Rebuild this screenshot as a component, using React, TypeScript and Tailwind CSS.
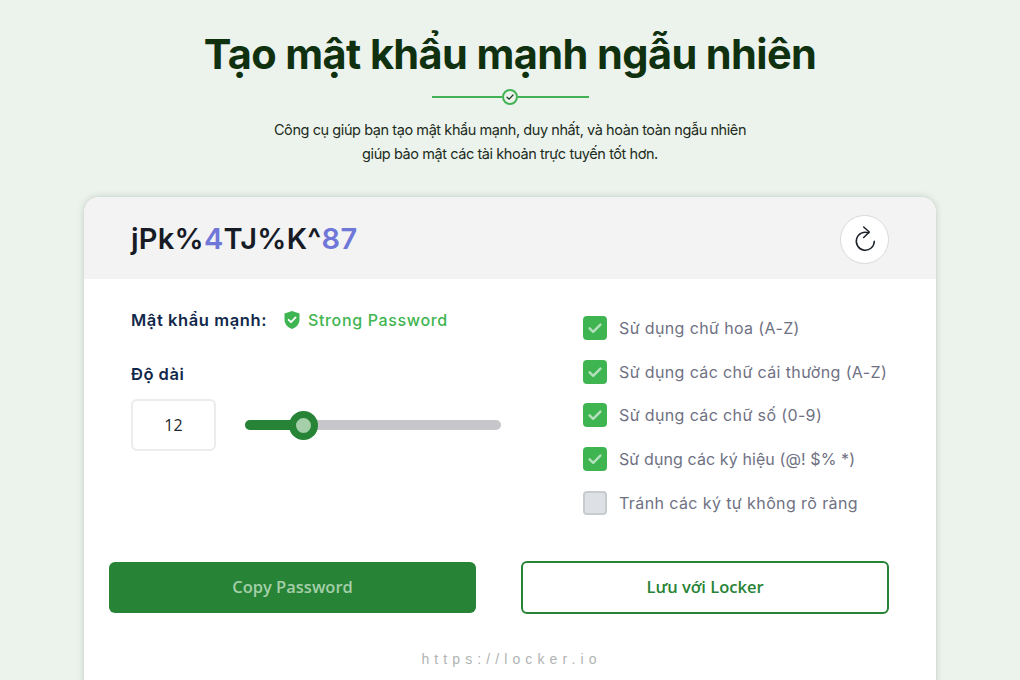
import React from "react";

const Check = () => (
  <svg width="16" height="16" viewBox="0 0 16 16" fill="none">
    <path d="M2.6 8.3 6.2 11.8 13.4 4.6" stroke="#b5e0bd" strokeWidth="2.4" strokeLinecap="round" strokeLinejoin="round" />
  </svg>
);

const options = [
  ["Sử dụng chữ hoa (A-Z)", true, "tracking-[0.37px]"],
  ["Sử dụng các chữ cái thường (A-Z)", true, "tracking-[0.37px]"],
  ["Sử dụng các chữ số (0-9)", true, "tracking-[0.37px]"],
  ["Sử dụng các ký hiệu (@! $% *)", true, "tracking-[0.1px]"],
  ["Tránh các ký tự không rõ ràng", false, "tracking-[0.4px]"],
] as const;

export default function App() {
  return (
    <div className="h-[680px] overflow-hidden bg-[#ecf3ed] flex flex-col items-center font-['Inter',sans-serif]">
      <h1 className="mt-[28px] text-[41.5px] leading-[52px] font-bold tracking-[-0.6px] text-[#10310f] whitespace-nowrap">
        Tạo mật khẩu mạnh ngẫu nhiên
      </h1>
      <div className="mt-[9px] flex items-center w-[157px]">
        <div className="h-[2px] flex-1 bg-[#43b254]" />
        <div className="w-4 h-4 rounded-full border-2 border-[#43b254] flex items-center justify-center">
          <svg width="10" height="10" viewBox="0 0 10 10" fill="none">
            <path d="M2 5.2 4.2 7.2 8 3" stroke="#1f3a24" strokeWidth="1.2" strokeLinecap="round" strokeLinejoin="round" />
          </svg>
        </div>
        <div className="h-[2px] flex-1 bg-[#43b254]" />
      </div>
      <p className="mt-[13px] text-[14.5px] leading-[24px] tracking-[-0.42px] text-[#1c2b20] text-center">
        Công cụ giúp bạn tạo mật khẩu mạnh, duy nhất, và hoàn toàn ngẫu nhiên
        <br />
        giúp bảo mật các tài khoản trực tuyến tốt hơn.
      </p>

      <div className="mt-[30px] w-[854px] shrink-0 h-[600px] bg-white rounded-t-[16px] border border-[#d5dfd8] shadow-[0_0_6px_rgba(60,90,70,0.18)] overflow-hidden">
        <div className="h-[82px] bg-[#f3f3f3] flex items-center justify-between pt-[2px] pl-[47px] pr-[47px]">
          <div className="text-[29px] font-semibold tracking-[0.25px] text-[#161b26]">
            jPk%<span className="text-[#6f78d8]">4</span>TJ%K^<span className="text-[#6f78d8]">87</span>
          </div>
          <div className="w-[49px] h-[49px] rounded-full bg-white border border-[#d9d9d9] flex items-center justify-center">
            <svg width="24" height="26" viewBox="0 0 24 26" fill="none" stroke="#1d2129" strokeWidth="1.5" strokeLinecap="round" strokeLinejoin="round">
              <path d="M21.3 15.3A9 9 0 1 1 15.7 6.9" />
              <path d="M10.7 1 16.3 6 10.7 11.5" />
            </svg>
          </div>
        </div>

        <div className="flex pl-[47px] pt-[29px]">
          <div className="w-[370px]">
            <div className="flex items-center h-[24px] text-[16.5px] font-semibold text-[#12284a]">
              <span className="w-[152px] tracking-[0.6px] whitespace-nowrap">Mật khẩu mạnh:</span>
              <svg width="18" height="20" viewBox="0 0 18 20" className="mr-[7px]">
                <path d="M9 1 16.5 3.6V9.5C16.5 14 13.4 17.5 9 19 4.6 17.5 1.5 14 1.5 9.5V3.6Z" fill="#3fb551" />
                <path d="M5.6 9.8 8 12.2 12.6 7.4" fill="none" stroke="#fff" strokeWidth="1.8" strokeLinecap="round" strokeLinejoin="round" />
              </svg>
              <span className="text-[#3fb551] text-[16px] font-medium tracking-[0.65px]">Strong Password</span>
            </div>
            <div className="mt-[30px] text-[16.5px] leading-[24px] font-semibold tracking-[0.5px] text-[#12284a]">Độ dài</div>
            <div className="mt-[13px] flex items-center">
              <div className="w-[85px] h-[52px] rounded-[6px] border-2 border-[#ececec] flex items-center justify-center text-[16px] text-[#22262e] font-['Open_Sans',sans-serif]">
                12
              </div>
              <div className="ml-[29px] w-[256px] h-[10px] rounded-full bg-[#c7c7cb] flex items-center">
                <div className="w-[45px] h-[10px] rounded-l-full bg-[#278336]" />
                <div className="w-[29px] h-[29px] -ml-[1px] shrink-0 rounded-full bg-[#a4cfa9] border-[7px] border-[#278336]" />
              </div>
            </div>
          </div>

          <div className="ml-[82px] mt-[8px] flex flex-col gap-[19.7px]">
            {options.map(([label, on, track]) => (
              <div key={label} className="flex items-center h-[24px]">
                {on ? (
                  <div className="w-6 h-6 rounded-[4px] bg-[#3fb551] flex items-center justify-center">
                    <Check />
                  </div>
                ) : (
                  <div className="w-6 h-6 rounded-[4px] bg-[#dde1e5] border-2 border-[#c6cbd0]" />
                )}
                <span className={`ml-3 text-[16px] ${track} text-[#6f7183] whitespace-nowrap`}>{label}</span>
              </div>
            ))}
          </div>
        </div>

        <div className="mt-[47px] pl-[25px] pr-[47px] flex justify-between font-['Open_Sans',sans-serif]">
          <button className="w-[367px] h-[51px] rounded-[6px] bg-[#278336] text-[#a4cfa9] text-[16.5px] font-semibold">
            Copy Password
          </button>
          <button className="w-[368px] h-[53px] -mt-[1px] rounded-[6px] border-2 border-[#278336] bg-white text-[#278336] text-[16.5px] font-semibold">
            Lưu với Locker
          </button>
        </div>
        <div className="mt-[35px] pl-[3px] text-center text-[14px] tracking-[5.1px] text-[#b0b3b2] font-['Liberation_Sans',sans-serif]">https://locker.io</div>
      </div>
    </div>
  );
}
